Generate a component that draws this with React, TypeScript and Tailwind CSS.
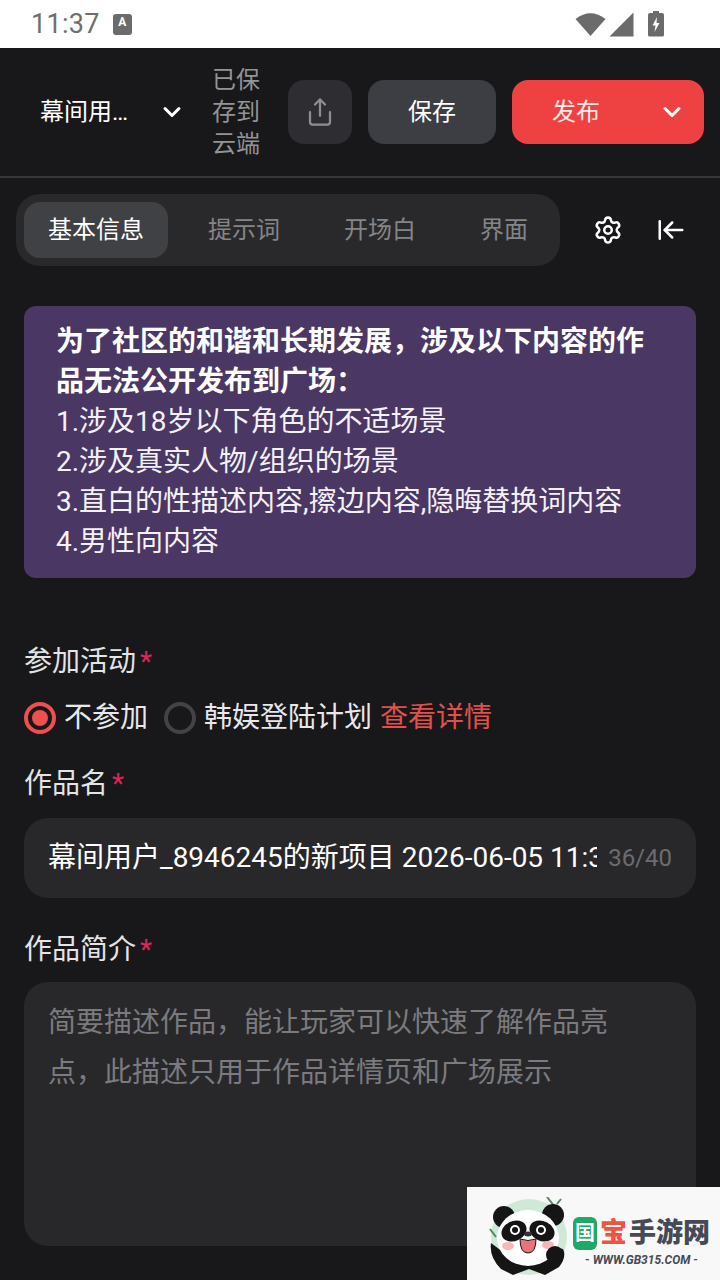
import React from 'react';
import { ChevronDown, Share, Settings, ArrowLeftToLine } from 'lucide-react';

const font = "font-['Roboto','Noto_Sans_CJK_SC',sans-serif]";

const Label: React.FC<{ text: string }> = ({ text }) => (
  <div className="flex items-start h-[40px] text-[28px] leading-[40px] text-[#e4e4e6]">
    <span>{text}</span>
    <span className="ml-[4px] text-[#e0245e]">*</span>
  </div>
);

const Watermark: React.FC = () => (
  <div className="absolute left-[467px] top-[1187px] w-[253px] h-[93px] bg-[#f8f8f8] flex items-start">
    <svg width="84" height="83" viewBox="0 0 84 83" className="ml-[20px] mt-[10px]">
      <circle cx="42" cy="40" r="38" fill="#cfe8d8" />
      <path d="M60 0 L68 10 M74 2 L70 7 M3 32 L9 40" stroke="#4f8a5b" strokeWidth="2" />
      <circle cx="17" cy="20" r="11" fill="#151515" />
      <circle cx="66" cy="18" r="11" fill="#151515" />
      <path d="M12 52 L4 46 Q2 60 14 72 L26 78 L42 72 L58 78 L72 70 Q80 60 76 52 L64 50 L60 60 L24 60 Z" fill="#151515" />
      <ellipse cx="41" cy="41" rx="31" ry="28" fill="#fff" />
      <ellipse cx="27" cy="34" rx="13" ry="10" fill="#151515" transform="rotate(-25 27 34)" />
      <ellipse cx="55" cy="34" rx="13" ry="10" fill="#151515" transform="rotate(25 55 34)" />
      <circle cx="28" cy="33" r="5" fill="#fff" />
      <circle cx="54" cy="33" r="5" fill="#fff" />
      <circle cx="28" cy="33" r="3" fill="#151515" />
      <circle cx="54" cy="33" r="3" fill="#151515" />
      <ellipse cx="41" cy="37" rx="4" ry="2.500" fill="#333" />
      <path d="M33 42 Q41 45 49 42 Q49 56 41 56 Q33 56 33 42 Z" fill="#e8737a" stroke="#151515" />
      <ellipse cx="21" cy="49" rx="6" ry="4" fill="#f5b8b8" />
      <ellipse cx="61" cy="48" rx="6" ry="4" fill="#f5b8b8" />
      <circle cx="68" cy="58" r="9" fill="#151515" />
    </svg>
    <div className="ml-[2px] mt-[28px] flex flex-col items-center">
      <div className="flex items-center h-[36px]">
        <span className="flex items-center justify-center w-[24px] h-[33px] rounded-[6px] bg-[#1fa866] text-white text-[20px] font-bold leading-none">国</span>
        <span className="ml-[3px] text-[#ee5444] text-[27px] leading-none font-black">宝</span>
        <span className="ml-[2px] text-[#454a56] text-[27px] leading-none font-black">手游网</span>
      </div>
      <span className="mt-[2px] text-[#454a56] text-[12px] leading-[14px] font-bold italic">- WWW.GB315.COM -</span>
    </div>
  </div>
);

export default function App() {
  return (
    <div className={`relative w-[720px] h-[1280px] overflow-hidden bg-[#18181b] ${font}`}>
      {/* status bar */}
      <div className="h-[48px] bg-white flex items-center pl-[31px] pr-[56px] text-[#6f6f6f]">
        <span className="text-[27px] leading-none tracking-[0.3px]">11:37</span>
        <span className="ml-[13px] flex items-start justify-center w-[19px] h-[21px] rounded-[3px] bg-[#6b6b6b] text-white text-[12px] leading-[17px] font-bold">A</span>
        <div className="ml-auto flex items-center">
          <svg width="31" height="26" viewBox="0 0 31 26">
            <path d="M0.500 8 Q15.500 -3.500 30.500 8 L15.500 25 Z" fill="#6b6b6b" />
          </svg>
          <svg width="25" height="25" viewBox="0 0 25 25" className="ml-[3px]">
            <path d="M24.500 0.500 V24.500 H0.500 Z" fill="#6b6b6b" />
          </svg>
          <svg width="16" height="26" viewBox="0 0 16 26" className="ml-[14px]">
            <path d="M5 0 H11 V2 H14 Q16 2 16 4 V24 Q16 25.500 14 25.500 H2 Q0 25.500 0 24 V4 Q0 2 2 2 H5 Z" fill="#6b6b6b" />
            <path d="M9 6 L4.500 14.500 H7.500 L6.500 21 L11.500 12 H8.500 Z" fill="#fff" />
          </svg>
        </div>
      </div>

      {/* toolbar */}
      <div className="h-[130px] border-b-2 border-[#36373a] flex items-center pb-[1px]">
        <span className="ml-[40px] w-[92px] whitespace-nowrap text-[24px] leading-[32px] text-white">幕间用…</span>
        <ChevronDown className="ml-[26px] text-white" size={28} strokeWidth={2.6} />
        <span className="ml-[26px] w-[48px] text-[24px] leading-[32px] text-[#949496]">已保存到云端</span>
        <button className="ml-[28px] w-[64px] h-[64px] rounded-[16px] bg-[#2e2e32] flex items-center justify-center text-[#8e8e92]">
          <Share size={30} strokeWidth={1.8} />
        </button>
        <button className="ml-[16px] w-[128px] h-[64px] rounded-[16px] bg-[#3c3e43] text-white text-[24px]">保存</button>
        <button className="ml-[16px] w-[192px] h-[64px] rounded-[16px] bg-[#ee4242] text-[#fdeaea] text-[24px] flex items-center">
          <span className="ml-[40px]">发布</span>
          <ChevronDown className="ml-[58px] text-white" size={28} strokeWidth={2.6} />
        </button>
      </div>

      {/* tabs */}
      <div className="mt-[16px] ml-[16px] flex items-center">
        <div className="w-[544px] h-[72px] rounded-[24px] bg-[#29292c] flex items-center pl-[8px] text-[24px] text-[#858588]">
          <span className="w-[144px] h-[56px] rounded-[16px] bg-[#3f4145] flex items-center justify-center text-white">基本信息</span>
          <span className="ml-[40px]">提示词</span>
          <span className="ml-[64px]">开场白</span>
          <span className="ml-[64px]">界面</span>
        </div>
        <Settings className="ml-[33px] text-white" size={30} strokeWidth={2} />
        <ArrowLeftToLine className="ml-[33px] text-white" size={30} strokeWidth={2} />
      </div>

      {/* notice */}
      <div className="mt-[40px] mx-[24px] h-[272px] rounded-[12px] bg-[#4a3763] pl-[32px] pr-[48px] pt-[16px] text-[28px] leading-[40px] text-[#f3f1f6]">
        <p className="font-bold text-white">为了社区的和谐和长期发展，涉及以下内容的作品无法公开发布到广场：</p>
        <p>1.涉及18岁以下角色的不适场景</p>
        <p>2.涉及真实人物/组织的场景</p>
        <p>3.直白的性描述内容,擦边内容,隐晦替换词内容</p>
        <p>4.男性向内容</p>
      </div>

      <div className="mt-[64px] mx-[24px]">
        <Label text="参加活动" />
        <div className="mt-[16px] flex items-center h-[40px] text-[28px] text-[#e8e8ea]">
          <span className="w-[32px] h-[32px] rounded-full border-[4px] border-[#ee4f4f] flex items-center justify-center">
            <span className="w-[16px] h-[16px] rounded-full bg-[#ee4f4f]" />
          </span>
          <span className="ml-[8px]">不参加</span>
          <span className="ml-[16px] w-[32px] h-[32px] rounded-full border-[4px] border-[#434346]" />
          <span className="ml-[8px]">韩娱登陆计划</span>
          <span className="ml-[8px] text-[#e2504a]">查看详情</span>
        </div>

        <div className="mt-[26px]">
          <Label text="作品名" />
        </div>
        <div className="mt-[14px] h-[80px] rounded-[24px] bg-[#28282b] flex items-center pl-[24px] pr-[24px]">
          <span className="w-[549px] overflow-hidden whitespace-nowrap text-[28px] text-white">幕间用户_8946245的新项目 2026-06-05 11:37</span>
          <span className="ml-auto text-[24px] text-[#6c6c70]">36/40</span>
        </div>

        <div className="mt-[32px]">
          <Label text="作品简介" />
        </div>
        <div className="mt-[12px] h-[264px] rounded-[24px] bg-[#28282b] pl-[24px] pr-[80px] pt-[16px] text-[28px] leading-[50px] text-[#7b7b7f]">
          简要描述作品，能让玩家可以快速了解作品亮点，此描述只用于作品详情页和广场展示
        </div>
      </div>

      <Watermark />
    </div>
  );
}
